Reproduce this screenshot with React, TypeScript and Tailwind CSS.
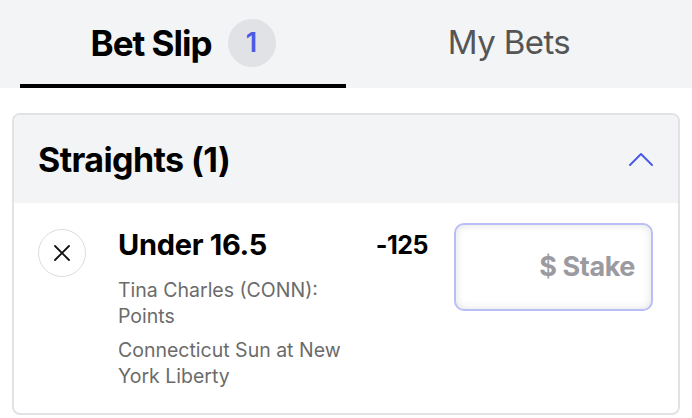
import React from 'react';

export default function App() {
  return (
    <div className="w-[692px] h-[418px] bg-white overflow-hidden" style={{ fontFamily: 'Inter, "Noto Sans", sans-serif' }}>
      {/* Tabs */}
      <div className="h-[88px] bg-[#f3f4f6] flex">
        <div className="w-[346px] pl-[20px] flex flex-col">
          <div className="flex-1 flex items-center justify-center gap-[16px] pt-[2px]">
            <span className="text-[35px] font-bold text-black tracking-[-1px]">Bet Slip</span>
            <span className="w-[48px] h-[48px] rounded-full bg-[#e1e2e6] flex items-center justify-center text-[27px] font-semibold text-[#4a5be6]">1</span>
          </div>
          <div className="h-[4px] bg-black"></div>
        </div>
        <div className="flex-1 flex items-center justify-center pr-[20px] pb-[2px]">
          <span className="text-[33px] text-[#555555] tracking-[-0.6px]">My Bets</span>
        </div>
      </div>

      {/* Card */}
      <div className="mx-[12px] mt-[25px] rounded-[8px] border-2 border-[#e2e2e6] overflow-hidden">
        <div className="h-[88px] bg-[#f3f4f6] flex items-center justify-between pl-[24px] pr-[24px]">
          <span className="text-[34px] font-bold text-black tracking-[-0.6px]">Straights (1)</span>
          <svg width="26" height="16" viewBox="0 0 26 16" fill="none">
            <path d="M2 14 L13 3 L24 14" stroke="#4a5be6" strokeWidth="2" strokeLinecap="round" strokeLinejoin="round" />
          </svg>
        </div>
        <div className="flex pl-[24px] pr-[25px] pt-[20px] pb-[24px]">
          <div className="w-[48px] h-[48px] rounded-full border border-[#dcdcdf] flex items-center justify-center mt-[6px]">
            <svg width="18" height="18" viewBox="0 0 18 18" fill="none">
              <path d="M2 2 L16 16 M16 2 L2 16" stroke="#111" strokeWidth="1.8" strokeLinecap="round" />
            </svg>
          </div>
          <div className="ml-[32px] w-[250px] flex flex-col">
            <span className="text-[29px] font-bold text-black tracking-[-0.3px] leading-[34px] mt-[5px]">Under 16.5</span>
            <span className="text-[19.5px] text-[#6b6b6b] leading-[26px] mt-[15px]">Tina Charles (CONN): Points</span>
            <span className="text-[19.5px] text-[#6b6b6b] leading-[26px] mt-[8px]">Connecticut Sun at New York Liberty</span>
          </div>
          <div className="w-[60px] text-right">
            <span className="text-[25px] font-bold text-black tracking-[-0.5px] leading-[30px] block mt-[7px]">-125</span>
          </div>
          <div className="ml-auto w-[199px] h-[88px] rounded-[10px] border-2 border-[#b9bff6] shadow-[inset_0_0_8px_rgba(0,0,0,0.12)] flex items-center justify-end pr-[16px]">
            <span className="text-[27px] font-bold text-[#9a9aa0] tracking-[-0.4px]">$ Stake</span>
          </div>
        </div>
      </div>
    </div>
  );
}
